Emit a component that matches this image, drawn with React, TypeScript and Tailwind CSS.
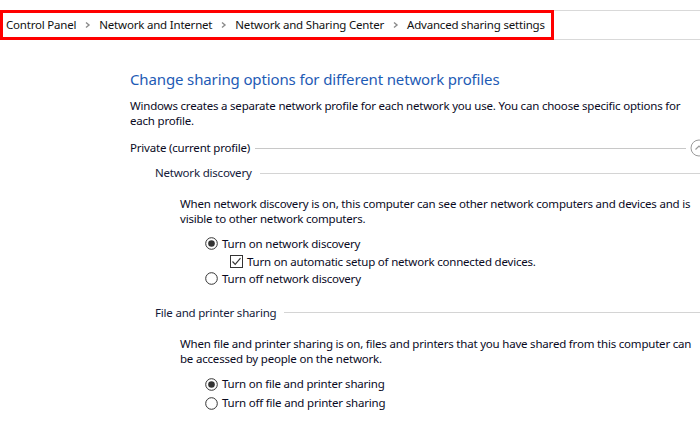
import React from "react";

const font = { fontFamily: '"Noto Sans", "Open Sans", sans-serif' };

function Chevron() {
  return (
    <svg width="7" height="8" viewBox="0 0 7 8" className="mx-[8px] shrink-0">
      <path d="M2 1.5 L5 4 L2 6.5" fill="none" stroke="#8a8a8a" strokeWidth="1.4" />
    </svg>
  );
}

function Radio({ checked }: { checked?: boolean }) {
  return (
    <svg width="13" height="13" viewBox="0 0 13 13" className="shrink-0">
      <circle cx="6.5" cy="6.5" r="5.8" fill="#fff" stroke="#333" strokeWidth="1" />
      {checked && <circle cx="6.5" cy="6.5" r="3.3" fill="#333" />}
    </svg>
  );
}

function Check() {
  return (
    <svg width="13" height="13" viewBox="0 0 13 13" className="shrink-0">
      <rect x="0.5" y="0.5" width="12" height="12" fill="#fff" stroke="#333" strokeWidth="1" />
      <path d="M2.5 6.5 L5.2 9.3 L10.5 3.2" fill="none" stroke="#333" strokeWidth="1.2" />
    </svg>
  );
}

function Collapse() {
  return (
    <svg width="18" height="18" viewBox="0 0 18 18" className="shrink-0">
      <circle cx="9" cy="9" r="8" fill="#fff" stroke="#9a9a9a" strokeWidth="1" />
      <path d="M5.5 10.5 L9 7 L12.5 10.5" fill="none" stroke="#9a9a9a" strokeWidth="1.2" />
    </svg>
  );
}

export default function App() {
  return (
    <div
      className="w-[700px] h-[427px] overflow-hidden bg-white text-[11.5px] tracking-[-0.2px] text-black pt-[10px]"
      style={font}
    >
      {/* address bar */}
      <div className="flex h-[30px]">
        <div className="flex items-center h-[30px] border-[3px] border-[#ff0000] pl-[3px] pr-[6px] whitespace-nowrap text-[#111]">
          <span>Control Panel</span>
          <Chevron />
          <span>Network and Internet</span>
          <Chevron />
          <span>Network and Sharing Center</span>
          <Chevron />
          <span>Advanced sharing settings</span>
        </div>
        <div className="flex-1 h-[30px] border-y border-[#d9d9d9]" />
      </div>

      {/* content */}
      <div className="pl-[130px] pt-[29px]">
        <div className="text-[15px] tracking-[-0.13px] leading-[20px] text-[#1e5bb5]">
          Change sharing options for different network profiles
        </div>
        <div className="mt-[9px] leading-[15px] pr-[8px] text-[#0a0a1e]">
          Windows creates a separate network profile for each network you use. You can choose specific options for each profile.
        </div>

        <div className="flex items-center mt-[11px] h-[18px]">
          <span className="whitespace-nowrap text-[#0a0a1e]">Private (current profile)</span>
          <div className="flex-1 h-px bg-[#c8c8c8] ml-[5px] mr-[4px]" />
          <div className="-mr-[8px]">
            <Collapse />
          </div>
        </div>

        <div className="pl-[25px]">
          <div className="flex items-center mt-[7px] h-[18px]">
            <span className="whitespace-nowrap text-[#141a3a]">Network discovery</span>
            <div className="flex-1 h-px bg-[#d4d4d4] ml-[8px]" />
          </div>

          <div className="pl-[25px] mt-[14px] leading-[15px] text-[#0a0a1e]">
            When network discovery is on, this computer can see other network computers and devices and is visible to other network computers.
          </div>

          <div className="pl-[50px] mt-[9px] flex flex-col text-[#0a0a1e]">
            <div className="flex items-center gap-[4px] h-[17.5px]">
              <Radio checked />
              <span>Turn on network discovery</span>
            </div>
            <div className="flex items-center gap-[4px] h-[17.5px] pl-[25px]">
              <Check />
              <span>Turn on automatic setup of network connected devices.</span>
            </div>
            <div className="flex items-center gap-[4px] h-[17.5px]">
              <Radio />
              <span>Turn off network discovery</span>
            </div>
          </div>

          <div className="flex items-center mt-[16px] h-[18px]">
            <span className="whitespace-nowrap text-[#141a3a]">File and printer sharing</span>
            <div className="flex-1 h-px bg-[#d4d4d4] ml-[8px]" />
          </div>

          <div className="pl-[25px] mt-[14px] leading-[15px] text-[#0a0a1e]">
            When file and printer sharing is on, files and printers that you have shared from this computer can be accessed by people on the network.
          </div>

          <div className="pl-[50px] mt-[9px] flex flex-col text-[#0a0a1e]">
            <div className="flex items-center gap-[4px] h-[19px]">
              <Radio checked />
              <span>Turn on file and printer sharing</span>
            </div>
            <div className="flex items-center gap-[4px] h-[19px]">
              <Radio />
              <span>Turn off file and printer sharing</span>
            </div>
          </div>
        </div>
      </div>
    </div>
  );
}
